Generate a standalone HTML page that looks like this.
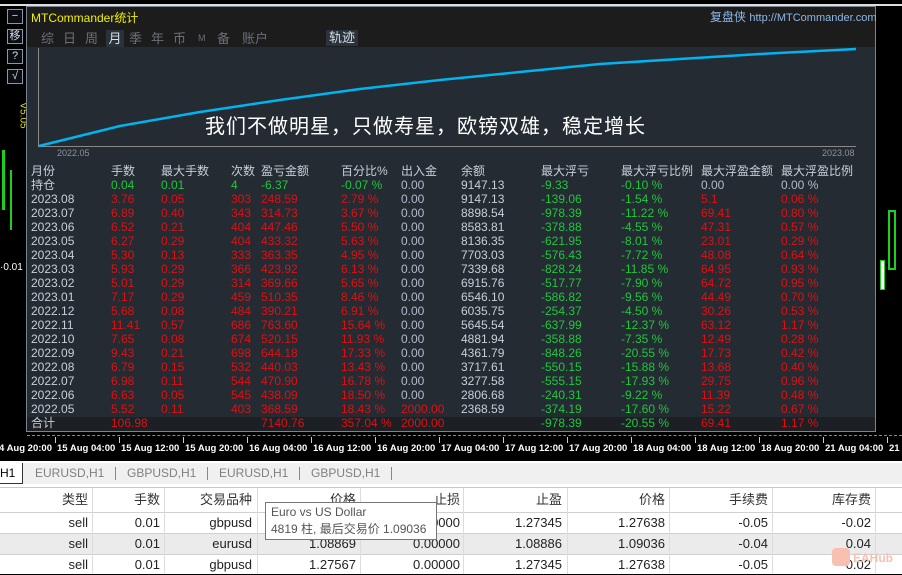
<!DOCTYPE html>
<html><head><meta charset="utf-8"><style>
*{margin:0;padding:0;box-sizing:border-box}
body{width:902px;height:574px;overflow:hidden;background:#000;font-family:"Liberation Sans","Noto Sans CJK SC",sans-serif;position:relative}
.a{position:absolute;white-space:nowrap}
.g{color:#1ec83c}.r{color:#e01010}.w{color:#c8cfd8}.b{color:#b0bccc}
.t{font-size:12px;line-height:14px}
.btn{position:absolute;left:7px;width:16px;height:15px;border:1px solid #8a97a8;color:#d8dee8;font-size:11px;line-height:13px;text-align:center;background:#0a0e14}
.tab{position:absolute;top:463px;height:20px;font-size:12px;color:#808080;line-height:20px}
.th,.td{position:absolute;font-size:13px;text-align:right}
.th{color:#333;top:488px;height:24px;line-height:24px}
.td{color:#222;height:20px;line-height:20px}
.vl{position:absolute;width:1px;background:#dcdcdc}
.m{position:absolute;top:30px;color:#6a7078;font-size:13px;line-height:17px}
.ax{position:absolute;top:443px;color:#fff;font-size:9.5px;font-weight:bold;white-space:nowrap;line-height:12px}
</style></head><body>
<div class="a" style="left:0;top:4px;width:902px;height:2px;background:#ddd"></div>
<div class="btn" style="top:9px">−</div>
<div class="btn" style="top:29px">移</div>
<div class="btn" style="top:49px">?</div>
<div class="btn" style="top:69px">√</div>
<div class="a" style="left:10px;top:110px;color:#e0e000;font-size:10px;transform:rotate(90deg)">V5.05</div>
<div class="a" style="left:2px;top:150px;width:3px;height:60px;background:#1ed01e"></div>
<div class="a" style="left:10px;top:170px;width:2px;height:60px;background:#1ed01e"></div>
<div class="a" style="left:0;top:262px;color:#fff;font-size:10px">·0.01</div>
<div class="a" style="left:888px;top:210px;width:8px;height:60px;border:2px solid #1ed01e"></div>
<div class="a" style="left:880px;top:260px;width:5px;height:30px;background:#fff;border:1px solid #1ed01e"></div>
<!-- panel -->
<div class="a" style="left:26px;top:6px;width:850px;height:426px;background:#252b33;border:1px solid #7a8594"></div>
<div class="a" style="left:27px;top:7px;width:848px;height:40px;background:#1c1c1c"></div>
<div class="a" style="left:31px;top:9px;color:#f0f000;font-size:12px">MTCommander统计</div>
<div class="a" style="left:710px;top:8px;color:#8cb8e8;font-size:12px">复盘侠 <span style="font-size:11px">http://MTCommander.com</span></div>
<div class="m" style="left:41px">综</div><div class="m" style="left:63px">日</div><div class="m" style="left:85px">周</div>
<div class="m" style="left:106px;width:18px;text-align:center;color:#d8dee8;background:#2a323c">月</div>
<div class="m" style="left:129px">季</div><div class="m" style="left:151px">年</div><div class="m" style="left:173px">币</div>
<div class="m" style="left:198px;font-size:9px">M</div><div class="m" style="left:217px">备</div><div class="m" style="left:242px">账户</div>
<div class="a" style="left:326px;top:30px;width:32px;height:16px;background:#2a323c;color:#d8dee8;font-size:13px;text-align:center;line-height:16px">轨迹</div>
<div class="a" style="left:38px;top:48px;width:1px;height:99px;background:#888"></div>
<div class="a" style="left:38px;top:146px;width:818px;height:1px;background:#888"></div>
<svg class="a" style="left:0;top:0" width="902" height="160"><polyline fill="none" stroke="#00b4f0" stroke-width="2.5" points="39,146 120,126 200,112 280,100 360,89 440,80 520,72 600,64 680,59 760,54 856,49"/></svg>
<div class="a" style="left:205px;top:110px;color:#fff;font-size:20px;letter-spacing:1px">我们不做明星，只做寿星，欧镑双雄，稳定增长</div>
<div class="a" style="left:57px;top:148px;color:#8a929c;font-size:9px">2022.05</div>
<div class="a" style="left:822px;top:148px;color:#8a929c;font-size:9px">2023.08</div>
<div class="a" style="left:27px;top:417px;width:848px;height:14px;background:#1c1f24"></div>
<div id="tb"></div>
<!-- axis -->
<div class="a" style="left:27px;top:435px;width:875px;border-top:1px dashed #888"></div>
<div id="ax"></div>
<div class="a" style="left:0;top:461px;width:902px;height:2px;background:#fff"></div>
<!-- bottom -->
<div class="a" style="left:0;top:463px;width:902px;height:21px;background:#f0f0f0"></div>
<div class="a" style="left:0;top:463px;width:23px;height:21px;background:#fff;border:1px solid #333;border-left:none;border-top:none"></div>
<div class="tab" style="left:0;color:#000">H1</div>
<div class="tab" style="left:35px">EURUSD,H1</div>
<div class="tab" style="left:127px">GBPUSD,H1</div>
<div class="tab" style="left:219px">EURUSD,H1</div>
<div class="tab" style="left:311px">GBPUSD,H1</div>
<div class="a" style="left:115px;top:467px;width:1px;height:13px;background:#888"></div>
<div class="a" style="left:207px;top:467px;width:1px;height:13px;background:#888"></div>
<div class="a" style="left:299px;top:467px;width:1px;height:13px;background:#888"></div>
<div class="a" style="left:391px;top:467px;width:1px;height:13px;background:#888"></div>
<div class="a" style="left:0;top:484px;width:902px;height:90px;background:#fff"></div>
<div class="a" style="left:0;top:487px;width:902px;height:1px;background:#c8c8c8"></div>
<div class="a" style="left:0;top:533px;width:902px;height:21px;background:#ebebeb"></div>
<div class="a" style="left:0;top:512px;width:902px;height:1px;background:#d0d0d0"></div>
<div class="a" style="left:0;top:533px;width:902px;height:1px;background:#d0d0d0"></div>
<div class="a" style="left:0;top:554px;width:902px;height:1px;background:#d0d0d0"></div>
<div id="bt"></div>
<div class="a" style="left:265px;top:502px;width:172px;height:38px;background:#fff;border:1px solid #767676;color:#555;font-size:12px;padding:1px 5px;line-height:17px">Euro vs US Dollar<br>4819 柱, 最后交易价 1.09036</div>
<div class="a" style="left:832px;top:548px;width:18px;height:18px;background:#f8c0b0;border-radius:4px"></div>
<div class="a" style="left:853px;top:551px;color:#f8c0b0;font-size:12px;font-weight:bold">EAHub</div>
<script>
var X=[31,111,161,231,261,341,401,461,541,621,701,781];
var H=["月份","手数","最大手数","次数","盈亏金额","百分比%","出入金","余额","最大浮亏","最大浮亏比例","最大浮盈金额","最大浮盈比例"];
var R=[["持仓","0.04","0.01","4","-6.37","-0.07 %","0.00","9147.13","-9.33","-0.10 %","0.00","0.00 %"],
["2023.08","3.76","0.05","303","248.59","2.79 %","0.00","9147.13","-139.06","-1.54 %","5.1","0.06 %"],
["2023.07","6.89","0.40","343","314.73","3.67 %","0.00","8898.54","-978.39","-11.22 %","69.41","0.80 %"],
["2023.06","6.52","0.21","404","447.46","5.50 %","0.00","8583.81","-378.88","-4.55 %","47.31","0.57 %"],
["2023.05","6.27","0.29","404","433.32","5.63 %","0.00","8136.35","-621.95","-8.01 %","23.01","0.29 %"],
["2023.04","5.30","0.13","333","363.35","4.95 %","0.00","7703.03","-576.43","-7.72 %","48.08","0.64 %"],
["2023.03","5.93","0.29","366","423.92","6.13 %","0.00","7339.68","-828.24","-11.85 %","64.95","0.93 %"],
["2023.02","5.01","0.29","314","369.66","5.65 %","0.00","6915.76","-517.77","-7.90 %","64.72","0.95 %"],
["2023.01","7.17","0.29","459","510.35","8.46 %","0.00","6546.10","-586.82","-9.56 %","44.49","0.70 %"],
["2022.12","5.68","0.08","484","390.21","6.91 %","0.00","6035.75","-254.37","-4.50 %","30.26","0.53 %"],
["2022.11","11.41","0.57","686","763.60","15.64 %","0.00","5645.54","-637.99","-12.37 %","63.12","1.17 %"],
["2022.10","7.65","0.08","674","520.15","11.93 %","0.00","4881.94","-358.88","-7.35 %","12.49","0.28 %"],
["2022.09","9.43","0.21","698","644.18","17.33 %","0.00","4361.79","-848.26","-20.55 %","17.73","0.42 %"],
["2022.08","6.79","0.15","532","440.03","13.43 %","0.00","3717.61","-550.15","-15.88 %","13.68","0.40 %"],
["2022.07","6.98","0.11","544","470.90","16.78 %","0.00","3277.58","-555.15","-17.93 %","29.75","0.96 %"],
["2022.06","6.63","0.05","545","438.09","18.50 %","0.00","2806.68","-240.31","-9.22 %","11.39","0.48 %"],
["2022.05","5.52","0.11","403","368.59","18.43 %","2000.00","2368.59","-374.19","-17.60 %","15.22","0.67 %"],
["合计","106.98","","","7140.76","357.04 %","2000.00","","-978.39","-20.55 %","69.41","1.17 %"]];
var h="";
H.forEach(function(t,i){h+='<div class="a t w" style="left:'+X[i]+'px;top:164px">'+t+'</div>'});
R.forEach(function(r,j){var y=178+j*14+(j==18?2:0);r.forEach(function(t,i){var c;
if(i==0||i==7)c="w";else if(i==6)c=(t=="0.00")?"b":"r";
else if(j==0)c=(i>=10)?"b":"g";else if(i==8||i==9)c="g";else c="r";
h+='<div class="a t '+c+'" style="left:'+X[i]+'px;top:'+y+'px">'+t+'</div>'})});
document.getElementById("tb").innerHTML=h;
var AX=["4 Aug 20:00","15 Aug 04:00","15 Aug 12:00","15 Aug 20:00","16 Aug 04:00","16 Aug 12:00","16 Aug 20:00","17 Aug 04:00","17 Aug 12:00","17 Aug 20:00","18 Aug 04:00","18 Aug 12:00","18 Aug 20:00","21 Aug 04:00","21"];
var a="";AX.forEach(function(t,i){var x=i==0?-1:57+(i-1)*64;a+='<div class="ax" style="left:'+x+'px">'+t+'</div><div class="a" style="left:'+(x-2)+'px;top:437px;width:1px;height:6px;background:#ccc"></div>'});
document.getElementById("ax").innerHTML=a;
var E=[88,160,252,356,460,562,665,768,871];
var BH=["类型","手数","交易品种","价格","止损","止盈","价格","手续费","库存费"];
var BR=[["sell","0.01","gbpusd","1.27567","0.00000","1.27345","1.27638","-0.05","-0.02"],
["sell","0.01","eurusd","1.08869","0.00000","1.08886","1.09036","-0.04","0.04"],
["sell","0.01","gbpusd","1.27567","0.00000","1.27345","1.27638","-0.05","-0.02"]];
var s="";
[92,164,257,360,463,567,669,772,875].forEach(function(x){s+='<div class="vl" style="left:'+x+'px;top:488px;height:86px"></div>'});
BH.forEach(function(t,i){s+='<div class="th" style="left:'+(E[i]-100)+'px;width:100px">'+t+'</div>'});
BR.forEach(function(r,j){r.forEach(function(t,i){s+='<div class="td" style="top:'+(513+j*21)+'px;left:'+(E[i]-100)+'px;width:100px">'+t+'</div>'})});
document.getElementById("bt").innerHTML=s;
</script>
</body></html>
